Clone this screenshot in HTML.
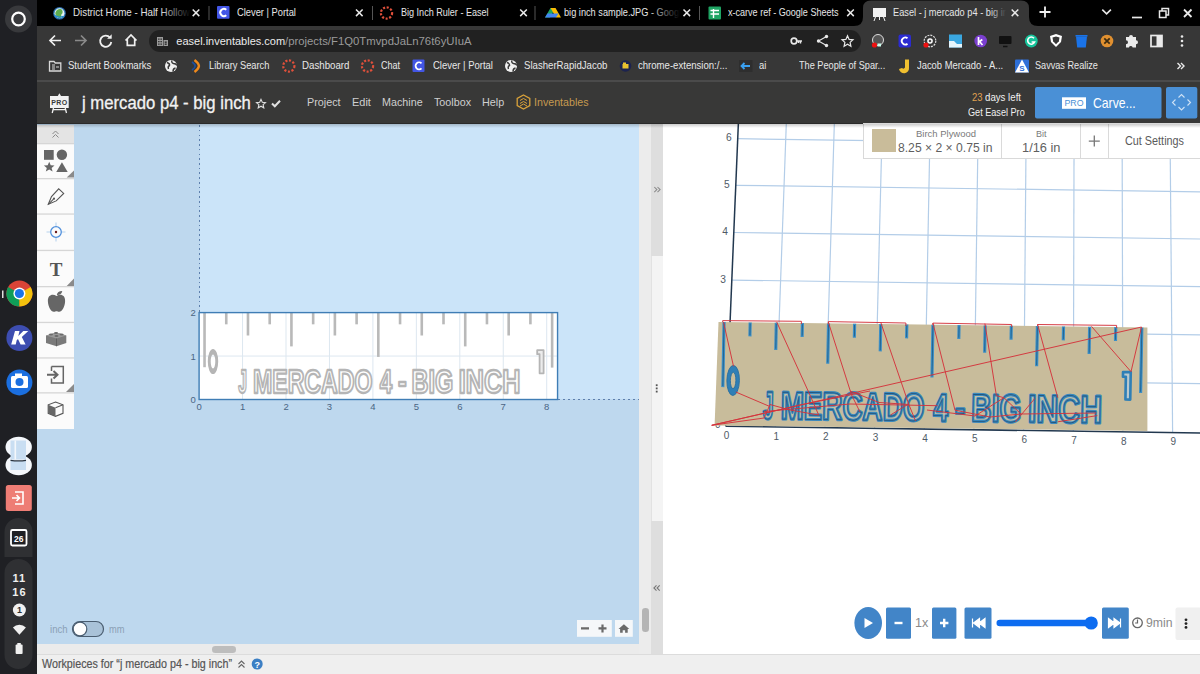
<!DOCTYPE html>
<html><head><meta charset="utf-8">
<style>
*{margin:0;padding:0;box-sizing:border-box}
html,body{width:1200px;height:674px;overflow:hidden;background:#fff;font-family:"Liberation Sans",sans-serif;position:relative}
.a{position:absolute}
.t{position:absolute;white-space:nowrap;line-height:1}
svg{position:absolute;overflow:visible}

</style></head><body>
<div class="a" style="left:0;top:0;width:37px;height:674px;background:#1f2024"></div>
<div class="a" style="left:37px;top:0;width:1163px;height:26px;background:#000"></div>
<div class="a" style="left:37px;top:26px;width:1163px;height:54px;background:#373737"></div>
<div class="a" style="left:37px;top:80px;width:1163px;height:2px;background:#4b4b4b"></div>
<svg style="left:0;top:0" width="37" height="674">
  <circle cx="18.5" cy="19" r="13.5" fill="#38393c"/>
  <circle cx="18.5" cy="19" r="6.3" fill="none" stroke="#fff" stroke-width="2.2"/>
  <rect x="2" y="290.5" width="1.5" height="7.5" fill="#ddd"/>
  <g transform="translate(19.4,293.5)">
    <circle r="13" fill="#db4437"/>
    <path d="M0 0 L-11.26 -6.5 A13 13 0 0 0 0 13 Z" fill="#0f9d58"/>
    <path d="M0 0 L11.26 -6.5 A13 13 0 0 1 0 13 Z" fill="#f4c20d"/>
    <circle r="6" fill="#fff"/><circle r="4.6" fill="#1a73e8"/>
  </g>
  <circle cx="19.4" cy="338" r="13" fill="#3d4db0"/>
  <path d="M15 331 h4.5 l-1.2 5 l5 -5 h5 l-6.5 6 l3.8 7.5 h-5 l-2.6 -5.5 l-1.3 1.2 l-1 4.3 h-4.5 z" fill="#fff"/>
  <circle cx="19.4" cy="382.4" r="13" fill="#1b6fe0"/>
  <rect x="11" y="376" width="17" height="12" rx="1.5" fill="#fff"/>
  <rect x="15" y="373.5" width="7" height="3" fill="#fff"/>
  <circle cx="19.5" cy="382" r="4" fill="#1b6fe0"/>
  <ellipse cx="18.7" cy="447" rx="13.2" ry="10.3" fill="#f4f7fb"/>
  <ellipse cx="18.7" cy="465" rx="13.2" ry="10.3" fill="#f4f7fb"/>
  <rect x="10.5" y="440.5" width="15.5" height="19" fill="#c9def2"/>
  <rect x="10.5" y="461" width="15.5" height="9" fill="#c9def2"/>
  <rect x="14.5" y="440.5" width="1.6" height="19" fill="#f4f7fb"/>
  <path d="M10.5 460.3 q8 1.2 15.5 0" stroke="#2a3440" stroke-width="1.3" fill="none"/>
  <rect x="5.8" y="485" width="26" height="26" rx="2.5" fill="#ee7d75"/>
  <path d="M15 492 h8 v12 h-8 M12 498 h7 M16.5 495 l3 3 l-3 3" fill="none" stroke="#fff" stroke-width="1.6"/>
  <path d="M4.5 532 a14 14 0 0 1 28 0 V557 H4.5 Z" fill="#2f3033"/>
  <rect x="11" y="530" width="15.5" height="15.5" rx="1.5" fill="#1f2024" stroke="#fff" stroke-width="1.8"/>
  <text x="18.8" y="541.8" font-size="8.5" font-weight="bold" fill="#fff" text-anchor="middle" font-family="Liberation Sans">26</text>
  <path d="M4.5 573 a14 14 0 0 1 28 0 V655 a14 14 0 0 1 -28 0 Z" fill="#2f3033"/>
  <text x="19.4" y="581.5" font-size="11" font-weight="bold" fill="#f0f0f0" text-anchor="middle" font-family="Liberation Sans" letter-spacing="1">11</text>
  <text x="19.4" y="595.5" font-size="11" font-weight="bold" fill="#f0f0f0" text-anchor="middle" font-family="Liberation Sans" letter-spacing="1">16</text>
  <circle cx="19.4" cy="610" r="6.5" fill="#f0f0f0"/>
  <text x="19.4" y="613.3" font-size="9" font-weight="bold" fill="#2f3033" text-anchor="middle" font-family="Liberation Sans">1</text>
  <path d="M12.9 627.5 A9 9 0 0 1 25.9 627.5 L19.4 634.8 Z" fill="#f0f0f0"/>
  <rect x="15.6" y="644.5" width="7" height="9.5" rx="1" fill="#f0f0f0"/>
  <rect x="17.3" y="643" width="3.5" height="2" fill="#f0f0f0"/>
</svg>
<svg style="left:854px;top:0" width="184" height="27">
  <path d="M0 26 Q9 26 9 17 V8 Q9 0.5 17 0.5 H167 Q175 0.5 175 8 V17 Q175 26 184 26 Z" fill="#373737"/>
</svg>
<svg style="left:0;top:0" width="1200" height="26">
  <g transform="translate(59.5,13.3)"><circle r="6.3" fill="#2a6fb0"/><circle r="5" fill="#e6f2fa"/><path d="M-4 -1 q2 -4 6 -3 q2 2 1 4 q-2 1 -1 4 q-3 2 -5 -1 q-2 -2 -1 -4z" fill="#5fae4f"/><path d="M-5 2 q4 3 9 1" stroke="#1f8fd0" stroke-width="1.2" fill="none"/></g>
  <rect x="217" y="6" width="12.5" height="12.7" rx="1" fill="#4356e6"/>
  <path d="M226.3 9.8 A3.6 3.6 0 1 0 226.3 15.2" fill="none" stroke="#fff" stroke-width="1.9"/>
  <circle cx="386.5" cy="13" r="5.6" fill="none" stroke="#e0503b" stroke-width="2.2" stroke-dasharray="2.1 1.6"/>
  <path d="M545 17.5 l5.5 -9.5 h5 l-5.5 9.5z" fill="#1ea362"/>
  <path d="M550.5 8 h5 l5.5 9.5 h-5z" fill="#fbbc04"/>
  <path d="M545 17.5 h11 l2.5 -4 h-11z" fill="#4285f4"/>
  <rect x="708.5" y="6.5" width="12.5" height="13" rx="1" fill="#1fa463"/>
  <path d="M710.5 10.5 h8.5 M713.5 9 v9 M710.5 14 h8.5" stroke="#fff" stroke-width="1.4"/>
  <rect x="873" y="8" width="13" height="9" fill="#f2f2f2"/>
  <path d="M875.5 17 l-1.5 4 M883.5 17 l1.5 4 M879.5 17 v3" stroke="#f2f2f2" stroke-width="1"/>
</svg>
<div class="a" style="left:70px;top:0;width:121px;height:674px;overflow:hidden"><div class="a" style="left:-70px;top:0;width:1200px;height:674px"><div class="t" style="left:73.3px;top:7.58px;font-size:10.2px;color:#e0e0e0;transform:scaleX(0.9608);transform-origin:0 0;">District Home - Half Hollow</div></div></div>
<div class="a" style="left:160px;top:2px;width:31px;height:22px;background:linear-gradient(90deg,rgba(0,0,0,0),#000)"></div>
<div class="t" style="left:236.8px;top:7.58px;font-size:10.2px;color:#e6e6e6;transform:scaleX(0.9156);transform-origin:0 0;">Clever | Portal</div>
<div class="t" style="left:401.0px;top:7.58px;font-size:10.2px;color:#e6e6e6;transform:scaleX(0.8890);transform-origin:0 0;">Big Inch Ruler - Easel</div>
<div class="a" style="left:560px;top:0;width:120px;height:674px;overflow:hidden"><div class="a" style="left:-560px;top:0;width:1200px;height:674px"><div class="t" style="left:564.3px;top:7.58px;font-size:10.2px;color:#e6e6e6;transform:scaleX(0.9035);transform-origin:0 0;">big inch sample.JPG - Google Drive</div></div></div>
<div class="a" style="left:648px;top:2px;width:32px;height:22px;background:linear-gradient(90deg,rgba(0,0,0,0),#000)"></div>
<div class="t" style="left:728.3px;top:7.58px;font-size:10.2px;color:#e6e6e6;transform:scaleX(0.8876);transform-origin:0 0;">x-carve ref - Google Sheets</div>
<div class="a" style="left:890px;top:0;width:116px;height:674px;overflow:hidden"><div class="a" style="left:-890px;top:0;width:1200px;height:674px"><div class="t" style="left:892.6px;top:7.58px;font-size:10.2px;color:#e6e6e6;transform:scaleX(0.9052);transform-origin:0 0;">Easel - j mercado p4 - big inch</div></div></div>
<div class="a" style="left:990px;top:3px;width:16px;height:22px;background:linear-gradient(90deg,rgba(55,55,55,0),#373737)"></div>
<svg style="left:0;top:0" width="1200" height="26">
<path d="M192.7 9.5 l6.6 6.6 M199.3 9.5 l-6.6 6.6" stroke="#e8e8e8" stroke-width="1.5"/>
<path d="M356.0 9.5 l6.6 6.6 M362.6 9.5 l-6.6 6.6" stroke="#e8e8e8" stroke-width="1.5"/>
<path d="M520.2 9.5 l6.6 6.6 M526.8 9.5 l-6.6 6.6" stroke="#e8e8e8" stroke-width="1.5"/>
<path d="M683.5 9.5 l6.6 6.6 M690.0999999999999 9.5 l-6.6 6.6" stroke="#e8e8e8" stroke-width="1.5"/>
<path d="M847.2 9.5 l6.6 6.6 M853.8 9.5 l-6.6 6.6" stroke="#e8e8e8" stroke-width="1.5"/>
<path d="M1011.7 9.5 l6.6 6.6 M1018.3 9.5 l-6.6 6.6" stroke="#e8e8e8" stroke-width="1.5"/>
<rect x="208.5" y="6" width="1" height="14" fill="#555"/>
<rect x="372" y="6" width="1" height="14" fill="#555"/>
<rect x="534.5" y="6" width="1" height="14" fill="#555"/>
<rect x="699" y="6" width="1" height="14" fill="#555"/>
<path d="M1045 6.5 v11 M1039.5 12 h11" stroke="#f0f0f0" stroke-width="1.8"/>
<path d="M1102.3 9.6 l4.3 4.3 l4.3 -4.3" fill="none" stroke="#e8e8e8" stroke-width="1.6"/>
<path d="M1132 17.5 h10" stroke="#e8e8e8" stroke-width="1.7"/>
<rect x="1159.5" y="11" width="6.5" height="6.5" fill="none" stroke="#e8e8e8" stroke-width="1.5"/>
<path d="M1162 11 V8.5 H1168.5 V15 H1166" fill="none" stroke="#e8e8e8" stroke-width="1.5"/>
<path d="M1184 9.5 l7.5 7.5 M1191.5 9.5 l-7.5 7.5" stroke="#e8e8e8" stroke-width="1.8"/>
</svg>
<div class="a" style="left:149px;top:30.4px;width:712px;height:22px;border-radius:11px;background:#212121"></div>
<svg style="left:0;top:0" width="1200" height="80">
  <path d="M50 40.5 h11 M55 35.5 l-5 5 l5 5" fill="none" stroke="#f0f0f0" stroke-width="1.7"/>
  <path d="M86 40.5 h-11 M81 35.5 l5 5 l-5 5" fill="none" stroke="#8a8a8a" stroke-width="1.7"/>
  <path d="M110 37.5 A5.6 5.6 0 1 0 111.3 42" fill="none" stroke="#f0f0f0" stroke-width="1.8"/>
  <path d="M111.7 34.2 v4.6 h-4.6 z" fill="#f0f0f0"/>
  <path d="M125.5 40.5 l5.5 -5.5 l5.5 5.5 M127.3 39 v6.3 h7.4 v-6.3" fill="none" stroke="#f0f0f0" stroke-width="1.7"/>
  <g fill="#9a9a9a"><rect x="157" y="37" width="6" height="9"/><rect x="163.5" y="40" width="4.5" height="6"/></g>
  <g fill="#212121"><rect x="158.2" y="38.5" width="1.3" height="1.3"/><rect x="160.5" y="38.5" width="1.3" height="1.3"/><rect x="158.2" y="41" width="1.3" height="1.3"/><rect x="160.5" y="41" width="1.3" height="1.3"/><rect x="158.2" y="43.5" width="1.3" height="1.3"/><rect x="160.5" y="43.5" width="1.3" height="1.3"/><rect x="164.7" y="41.5" width="2" height="1.3"/><rect x="164.7" y="43.5" width="2" height="1.3"/></g>
  <circle cx="794" cy="41" r="2.8" fill="none" stroke="#e8e8e8" stroke-width="1.7"/>
  <path d="M796.8 41 h5.2 M800.5 41 v2.6 M798.5 41 v2" stroke="#e8e8e8" stroke-width="1.5"/>
  <circle cx="826.5" cy="36.5" r="1.7" fill="#e8e8e8"/><circle cx="818.5" cy="41" r="1.7" fill="#e8e8e8"/><circle cx="826.5" cy="45.5" r="1.7" fill="#e8e8e8"/>
  <path d="M826.5 36.5 L818.5 41 L826.5 45.5" fill="none" stroke="#e8e8e8" stroke-width="1.1"/>
  <path d="M847.5 35.8 l1.6 3.6 l3.9 .4 l-2.9 2.6 l.8 3.8 l-3.4 -2 l-3.4 2 l.8 -3.8 l-2.9 -2.6 l3.9 -.4z" fill="none" stroke="#e8e8e8" stroke-width="1.2"/>
  <!-- extensions -->
  <circle cx="878" cy="40" r="5.5" fill="#555" stroke="#ddd" stroke-width="1"/>
  <circle cx="874.5" cy="45" r="2.6" fill="#ee1111"/><rect x="877.5" y="43.5" width="3.5" height="3" fill="#cfe"/>
  <rect x="898.5" y="34.5" width="12.5" height="13" rx="2" fill="#2b2bd0"/>
  <path d="M907.5 38.3 A3.5 3.5 0 1 0 907.5 43.7" fill="none" stroke="#fff" stroke-width="1.8"/>
  <circle cx="930" cy="41" r="5.8" fill="none" stroke="#ddd" stroke-width="1.2" stroke-dasharray="2 1"/>
  <circle cx="930" cy="41" r="2.8" fill="#fff"/><circle cx="930" cy="41" r="1.3" fill="#555"/>
  <circle cx="926" cy="45" r="2.6" fill="#ee1111"/>
  <rect x="949" y="34.5" width="13" height="13" fill="#3aa7e0"/>
  <path d="M949 41 h5 l3 3 h5 v3.5 h-13z" fill="#e6f5fc"/>
  <circle cx="980.7" cy="41" r="6.3" fill="#7b3fd0"/>
  <path d="M978.5 37 v8 M978.5 42.3 l3.8 -2.8 M979.5 41.5 l3 3.5" stroke="#fff" stroke-width="1.7" fill="none"/>
  <rect x="999" y="36" width="12.5" height="8" rx="1" fill="#111"/>
  <path d="M1003 46.5 h4.5" stroke="#111" stroke-width="1.5"/>
  <circle cx="1031.3" cy="41" r="6.4" fill="#15c39a"/>
  <path d="M1034 38.2 A3.6 3.6 0 1 0 1034.6 42 h-3" fill="none" stroke="#fff" stroke-width="1.6"/>
  <path d="M1050 36 l6 -2 l6 2 l-1 6 l-5 5 l-5 -5z" fill="#fff"/>
  <path d="M1052.5 37.5 l3.5 -1 l3.5 1 l-.7 3.8 l-2.8 3 l-2.8 -3z" fill="#373737"/>
  <path d="M1076 36.5 h11 l-1.2 11 h-8.6z" fill="#1a73e8"/><rect x="1075.5" y="35" width="12" height="1.6" fill="#1a73e8"/>
  <circle cx="1107" cy="41" r="6.3" fill="#e09030"/>
  <path d="M1104.3 38.3 l5.4 5.4 M1109.7 38.3 l-5.4 5.4" stroke="#3a2a10" stroke-width="1.7"/>
  <path d="M1126 37 h3 a2 2 0 0 1 4 0 h3 v3.2 a2 2 0 0 1 0 4 v3.3 h-3.3 a2 2 0 0 0 -3.8 0 h-2.9 v-3.3 a2 2 0 0 0 0 -4z" fill="#eaeaea"/>
  <rect x="1151" y="35.5" width="11" height="11" fill="none" stroke="#eaeaea" stroke-width="1.7"/>
  <rect x="1156.5" y="35.5" width="5.5" height="11" fill="#eaeaea"/>
  <circle cx="1182" cy="36.5" r="1.3" fill="#eaeaea"/><circle cx="1182" cy="41" r="1.3" fill="#eaeaea"/><circle cx="1182" cy="45.5" r="1.3" fill="#eaeaea"/>
</svg>
<div class="t" style="left:176.3px;top:35.80px;font-size:11px;color:#ececec;">easel.inventables.com</div>
<div class="t" style="left:285.3px;top:35.80px;font-size:11px;color:#9a9a9a;transform:scaleX(1.0305);transform-origin:0 0;">/projects/F1Q0TmvpdJaLn76t6yUIuA</div>
<svg style="left:0;top:0" width="1200" height="80">
  <path d="M49.5 61.5 h4.5 l1.3 1.5 h5.5 v8 h-11.3z" fill="none" stroke="#d8d8d8" stroke-width="1.3"/>
  <path d="M52 65 h3 M52 67 h3 M52 69 h3 M56 67 h3" stroke="#d8d8d8" stroke-width="1"/>
  <circle cx="171" cy="66" r="6" fill="#f0f0f0"/>
  <path d="M167 62.5 q3 1 2.5 3 q-2 1 -1 3.5 M172 60.5 q-1 2 1.5 3 q2.5 0 3.5 2 M173 71.5 q0 -3 2.5 -3.5" fill="none" stroke="#373737" stroke-width="1.4"/>
  <path d="M194.5 60 q4 3 4.5 6 q-.5 3 -4.5 6" fill="none" stroke="#f08a1c" stroke-width="2.3"/>
  <path d="M192 62 q3 2 3.2 4 q-.2 2 -3.2 4" fill="none" stroke="#1d4fa0" stroke-width="1.6"/>
  <circle cx="288.8" cy="66" r="5.6" fill="none" stroke="#e0503b" stroke-width="2.2" stroke-dasharray="2.1 1.6"/>
  <circle cx="367.5" cy="66" r="5.6" fill="none" stroke="#e0503b" stroke-width="2.2" stroke-dasharray="2.1 1.6"/>
  <rect x="412.5" y="59.5" width="12" height="12.5" rx="1" fill="#4356e6"/>
  <path d="M421.5 63.3 A3.5 3.5 0 1 0 421.5 68.4" fill="none" stroke="#fff" stroke-width="1.8"/>
  <circle cx="511" cy="66" r="6" fill="#f0f0f0"/>
  <path d="M507 62.5 q3 1 2.5 3 q-2 1 -1 3.5 M512 60.5 q-1 2 1.5 3 q2.5 0 3.5 2 M513 71.5 q0 -3 2.5 -3.5" fill="none" stroke="#373737" stroke-width="1.4"/>
  <circle cx="625.5" cy="66" r="5.8" fill="#1c2350"/><rect x="622.5" y="64" width="6" height="4.5" fill="#e8c030"/><rect x="623" y="62.5" width="3" height="1.5" fill="#e8c030"/>
  <rect x="739" y="60" width="13.5" height="12" fill="#2e2e2e"/>
  <path d="M750 66 h-8 M744.5 63 l-3 3 l3 3" fill="none" stroke="#3aa0f0" stroke-width="1.8"/>
  <path d="M905 59.5 h4 v8 a5 5 0 0 1 -10 1.5 l3 -1 a2 2 0 0 0 3 -.5z" fill="#f0c030"/>
  <rect x="1015" y="59.5" width="14" height="13" rx="1" fill="#2e6fd8"/>
  <path d="M1015 72.5 l7 -13 l7 13z" fill="#fff"/>
  <text x="1022" y="71" font-size="8" font-weight="bold" fill="#2e6fd8" text-anchor="middle" font-family="Liberation Sans">S</text>
  <path d="M1177.5 63 l3 3 l-3 3 M1181 63 l3 3 l-3 3" fill="none" stroke="#eaeaea" stroke-width="1.4"/>
</svg>
<div class="t" style="left:67.5px;top:61.28px;font-size:10.2px;color:#e8e8e8;transform:scaleX(0.9381);transform-origin:0 0;">Student Bookmarks</div>
<div class="t" style="left:208.5px;top:61.28px;font-size:10.2px;color:#e8e8e8;transform:scaleX(0.9121);transform-origin:0 0;">Library Search</div>
<div class="t" style="left:301.5px;top:61.28px;font-size:10.2px;color:#e8e8e8;transform:scaleX(0.9519);transform-origin:0 0;">Dashboard</div>
<div class="t" style="left:381.0px;top:61.28px;font-size:10.2px;color:#e8e8e8;transform:scaleX(0.8818);transform-origin:0 0;">Chat</div>
<div class="t" style="left:432.5px;top:61.28px;font-size:10.2px;color:#e8e8e8;transform:scaleX(0.9311);transform-origin:0 0;">Clever | Portal</div>
<div class="t" style="left:524.0px;top:61.28px;font-size:10.2px;color:#e8e8e8;transform:scaleX(0.9440);transform-origin:0 0;">SlasherRapidJacob</div>
<div class="t" style="left:638.0px;top:61.28px;font-size:10.2px;color:#e8e8e8;transform:scaleX(0.9397);transform-origin:0 0;">chrome-extension:/...</div>
<div class="t" style="left:758.8px;top:61.28px;font-size:10.2px;color:#e8e8e8;transform:scaleX(0.9195);transform-origin:0 0;">ai</div>
<div class="t" style="left:798.8px;top:61.28px;font-size:10.2px;color:#e8e8e8;transform:scaleX(0.9005);transform-origin:0 0;">The People of Spar...</div>
<div class="t" style="left:916.7px;top:61.28px;font-size:10.2px;color:#e8e8e8;transform:scaleX(0.9225);transform-origin:0 0;">Jacob Mercado - A...</div>
<div class="t" style="left:1035.0px;top:61.28px;font-size:10.2px;color:#e8e8e8;transform:scaleX(0.8961);transform-origin:0 0;">Savvas Realize</div>
<div class="a" style="left:37px;top:82px;width:1163px;height:42px;background:#383837;border-bottom:1.5px solid #2a2a2a"></div>
<svg style="left:0;top:80px" width="1200" height="45">
  <path d="M59.4 13.2 l1.6 2.8 h-3.2z" fill="#f2f2f2"/>
  <rect x="50" y="16" width="18.7" height="12" fill="#f2f2f2"/>
  <path d="M53.5 28 l-1.3 5 M65.2 28 l1.3 5 M53 29.6 h12.7" stroke="#f2f2f2" stroke-width="1.3"/>
  <text x="59.4" y="25.2" font-size="7" font-weight="bold" fill="#3a3a3a" text-anchor="middle" font-family="Liberation Sans" letter-spacing=".4">PRO</text>
  <path transform="translate(0,4.6)" d="M261 14.8 l1.3 2.9 l3.2 .3 l-2.4 2.1 l.7 3.1 l-2.8 -1.6 l-2.8 1.6 l.7 -3.1 l-2.4 -2.1 l3.2 -.3z" fill="none" stroke="#e0e0e0" stroke-width="1.1"/>
  <path transform="translate(0,4)" d="M272 19.5 l2.8 2.8 l5.2 -5.6" fill="none" stroke="#e0e0e0" stroke-width="2"/>
  <g transform="translate(523.5,22)" fill="none" stroke="#d9a23a" stroke-width="1.3">
    <path d="M0 -7 L6.3 -3.5 V3.5 L0 7 L-6.3 3.5 V-3.5 Z"/>
    <path d="M-3.5 -1.5 L0 -3.5 L3.5 -1.5 M-3.5 1.5 L0 -0.5 L3.5 1.5 M-3.5 4 L0 2 L3.5 4" stroke-width="1"/>
  </g>
  <rect x="1035" y="6.9" width="126.5" height="31.6" rx="2" fill="#4a90d6"/>
  <rect x="1166" y="6.9" width="31.3" height="31.6" rx="2" fill="#4a90d6"/>
  <rect x="1062" y="17.3" width="24" height="11.5" fill="#fff"/>
  <text x="1074" y="26.3" font-size="8.8" fill="#4a90d6" text-anchor="middle" font-family="Liberation Sans">PRO</text>
  <g fill="none" stroke="#cfe2f5" stroke-width="1.1">
    <path d="M1178.5 17.5 l3 -3 l3 3 M1178.5 27 l3 3 l3 -3 M1175.5 19.5 l-3 3 l3 3 M1187.5 19.5 l3 3 l-3 3"/>
  </g>
</svg>
<div class="t" style="left:82.0px;top:95.02px;font-size:17.8px;color:#f2f2f2;transform:scaleX(0.9385);transform-origin:0 0;-webkit-text-stroke:0.3px #f2f2f2">j mercado p4 - big inch</div>
<div class="t" style="left:306.8px;top:96.66px;font-size:11.5px;color:#cfcfcf;transform:scaleX(0.9387);transform-origin:0 0;">Project</div>
<div class="t" style="left:352.0px;top:96.66px;font-size:11.5px;color:#cfcfcf;transform:scaleX(0.9537);transform-origin:0 0;">Edit</div>
<div class="t" style="left:382.0px;top:96.66px;font-size:11.5px;color:#cfcfcf;transform:scaleX(0.9340);transform-origin:0 0;">Machine</div>
<div class="t" style="left:434.0px;top:96.66px;font-size:11.5px;color:#cfcfcf;transform:scaleX(0.9334);transform-origin:0 0;">Toolbox</div>
<div class="t" style="left:481.7px;top:96.66px;font-size:11.5px;color:#cfcfcf;transform:scaleX(0.9428);transform-origin:0 0;">Help</div>
<div class="t" style="left:534.0px;top:96.66px;font-size:11.5px;color:#c69a50;transform:scaleX(0.9265);transform-origin:0 0;">Inventables</div>
<div class="t" style="left:971.9px;top:92.40px;font-size:11px;color:#e0a050;transform:scaleX(0.8581);transform-origin:0 0;">23</div>
<div class="t" style="left:985.0px;top:92.40px;font-size:11px;color:#f0f0f0;transform:scaleX(0.8788);transform-origin:0 0;">days left</div>
<div class="t" style="left:968.3px;top:107.00px;font-size:11px;color:#f0f0f0;transform:scaleX(0.8280);transform-origin:0 0;">Get Easel Pro</div>
<div class="t" style="left:1092.7px;top:94.97px;font-size:15px;color:#ffffff;transform:scaleX(0.8131);transform-origin:0 0;">Carve...</div>
<div class="a" style="left:37px;top:124px;width:602px;height:520px;background:#bed8ee"></div>
<div class="a" style="left:199.5px;top:124px;width:439.5px;height:275px;background:#cbe4f9"></div>
<div class="a" style="left:198.5px;top:125px;width:1.3px;height:188px;background:repeating-linear-gradient(180deg,#5d7fad 0 1.6px,transparent 1.6px 4.75px)"></div>
<div class="a" style="left:558px;top:398.6px;width:81px;height:1.3px;background:repeating-linear-gradient(90deg,#5d7fad 0 2.5px,transparent 2.5px 5px)"></div>
<div class="a" style="left:37px;top:125px;width:37px;height:304px;background:#fbfbfb"></div>
<div class="a" style="left:37px;top:125px;width:37px;height:18px;background:#e4e4e4"></div>
<svg style="left:0;top:0" width="80" height="440">
<rect x="37" y="143" width="37" height="1.3" fill="#d6d6d6"/>
<rect x="37" y="178" width="37" height="1.3" fill="#d6d6d6"/>
<rect x="37" y="213.4" width="37" height="1.3" fill="#d6d6d6"/>
<rect x="37" y="249.8" width="37" height="1.3" fill="#d6d6d6"/>
<rect x="37" y="286" width="37" height="1.3" fill="#d6d6d6"/>
<rect x="37" y="321.8" width="37" height="1.3" fill="#d6d6d6"/>
<rect x="37" y="357.3" width="37" height="1.3" fill="#d6d6d6"/>
<rect x="37" y="392.2" width="37" height="1.3" fill="#d6d6d6"/>
<path d="M52.5 134 l3 -3 l3 3 M52.5 137.5 l3 -3 l3 3" fill="none" stroke="#8a8a8a" stroke-width="1"/>
<g fill="#666">
  <rect x="44" y="150" width="9.7" height="9.8"/>
  <circle cx="61.9" cy="154.8" r="5.2"/>
  <path d="M49.2 161.8 l1.5 3.5 l3.8 .2 l-2.9 2.4 l1 3.7 l-3.4 -2.1 l-3.4 2.1 l1 -3.7 l-2.9 -2.4 l3.8 -.2z"/>
  <path d="M56.2 172 l5.75 -9.8 l5.75 9.8z"/>
  <path d="M74 170.4 v7.2 h-7.3z" fill="#8a8a8a"/>
  <path d="M74 278.6 v7.3 h-7.3z" fill="#8a8a8a"/>
  <path d="M74 384 v8 h-8z" fill="#8a8a8a"/>
</g>
<g fill="none" stroke="#555" stroke-width="1.1">
  <path d="M48.3 204.3 l3.2 -7.8 l7.2 -7.7 l5 4.6 l-7.5 7.5 z"/>
  <path d="M48.3 204.3 l5.2 -5.2"/>
</g>
<circle cx="54" cy="198.7" r="1.1" fill="#555"/>
<g stroke="#b8d4ee" stroke-width="1.1"><path d="M56 222.5 v3.5 M56 238 v3.5 M46.5 232 h3.5 M62 232 h3.5"/></g>
<circle cx="56" cy="232" r="5.3" fill="none" stroke="#4f8fdc" stroke-width="1.3"/>
<circle cx="56" cy="232" r="1.2" fill="#6a1a1a"/>
<text x="56" y="275.5" font-size="19" font-weight="bold" fill="#555" text-anchor="middle" font-family="Liberation Serif">T</text>
<path d="M56.5 296 c-4 -2.5 -9 -1 -8.6 5.5 c.4 6 3.3 10.5 6 10.3 c1.2 0 1.8 -.6 2.6 -.6 c.8 0 1.4 .6 2.6 .6 c2.7 .2 5.6 -4.3 6 -10.3 c.4 -6.5 -4.6 -8 -8.6 -5.5z" fill="#666"/>
<path d="M56.8 295 c.5 -2.5 2 -4 5.5 -4 c-.5 2.8 -2.3 4.2 -5.5 4z" fill="#666"/>
<path d="M46 335.5 l10.5 -3 l9.8 3 v7.5 l-9.8 3.2 l-10.5 -3.2z" fill="#7a7a7a"/>
<path d="M46 335.5 l10.5 3 l9.8 -3 l-9.8 -3z" fill="#999"/>
<path d="M56.5 338.5 v7.7" stroke="#5f5f5f" stroke-width="1"/>
<g fill="#6a6a6a"><ellipse cx="51" cy="334.4" rx="2" ry="1"/><ellipse cx="56" cy="333" rx="2" ry="1"/><ellipse cx="56.5" cy="336" rx="2" ry="1"/><ellipse cx="61.5" cy="334.5" rx="2" ry="1"/></g>
<path d="M51.5 366.5 h11.8 v16.5 h-11.8 v-4.5 M51.5 371 v-4.5" fill="none" stroke="#666" stroke-width="1.5"/>
<path d="M47 374.8 h9.5 M53.5 371 l4 3.8 l-4 3.8" fill="none" stroke="#666" stroke-width="2"/>
<path d="M55.5 402 l7.5 2.8 v8.5 l-7.5 3 l-7.3 -3 v-8.5z" fill="none" stroke="#555" stroke-width="1.1"/>
<path d="M48.2 404.8 l7.3 3 v8.5 l-7.3 -3z" fill="#666"/>
<path d="M55.5 407.8 l7.5 -3" stroke="#555" stroke-width="1.1"/>

</svg>
<svg style="left:0;top:0" width="640" height="650">
<rect x="199.10" y="312.60" width="358.46" height="86.90" fill="#fff"/>
<rect x="242.05" y="312.60" width="1" height="86.90" fill="#dde7f0"/>
<rect x="285.50" y="312.60" width="1" height="86.90" fill="#dde7f0"/>
<rect x="328.95" y="312.60" width="1" height="86.90" fill="#dde7f0"/>
<rect x="372.40" y="312.60" width="1" height="86.90" fill="#dde7f0"/>
<rect x="415.85" y="312.60" width="1" height="86.90" fill="#dde7f0"/>
<rect x="459.30" y="312.60" width="1" height="86.90" fill="#dde7f0"/>
<rect x="502.75" y="312.60" width="1" height="86.90" fill="#dde7f0"/>
<rect x="546.20" y="312.60" width="1" height="86.90" fill="#dde7f0"/>
<rect x="199.10" y="355.55" width="358.46" height="1" fill="#dde7f0"/>
<rect x="203.23" y="312.60" width="2.6" height="54.62" fill="#b9b9b9"/>
<rect x="224.96" y="312.60" width="2.6" height="11.73" fill="#b9b9b9"/>
<rect x="246.68" y="312.60" width="2.6" height="22.90" fill="#b9b9b9"/>
<rect x="268.41" y="312.60" width="2.6" height="11.73" fill="#b9b9b9"/>
<rect x="290.13" y="312.60" width="2.6" height="33.80" fill="#b9b9b9"/>
<rect x="311.86" y="312.60" width="2.6" height="11.73" fill="#b9b9b9"/>
<rect x="333.58" y="312.60" width="2.6" height="22.90" fill="#b9b9b9"/>
<rect x="355.31" y="312.60" width="2.6" height="11.73" fill="#b9b9b9"/>
<rect x="377.03" y="312.60" width="2.6" height="44.32" fill="#b9b9b9"/>
<rect x="398.76" y="312.60" width="2.6" height="11.73" fill="#b9b9b9"/>
<rect x="420.48" y="312.60" width="2.6" height="22.90" fill="#b9b9b9"/>
<rect x="442.21" y="312.60" width="2.6" height="11.73" fill="#b9b9b9"/>
<rect x="463.93" y="312.60" width="2.6" height="33.80" fill="#b9b9b9"/>
<rect x="485.66" y="312.60" width="2.6" height="11.73" fill="#b9b9b9"/>
<rect x="507.38" y="312.60" width="2.6" height="22.90" fill="#b9b9b9"/>
<rect x="529.11" y="312.60" width="2.6" height="11.73" fill="#b9b9b9"/>
<rect x="550.83" y="312.60" width="2.6" height="55.01" fill="#b9b9b9"/>
<text transform="translate(238.21,393.30) scale(0.4834,1)" font-size="32.8" font-weight="bold" font-family="Liberation Sans" fill="#fff" stroke="#b5b5b5" stroke-width="2.3" stroke-linejoin="round">J</text>
<text transform="translate(252.90,393.30) scale(0.7064,1)" font-size="32.8" font-weight="bold" font-family="Liberation Sans" fill="#fff" stroke="#b5b5b5" stroke-width="2.3" stroke-linejoin="round">MERCADO</text>
<text transform="translate(379.81,393.30) scale(0.6826,1)" font-size="32.8" font-weight="bold" font-family="Liberation Sans" fill="#fff" stroke="#b5b5b5" stroke-width="2.3" stroke-linejoin="round">4</text>
<text transform="translate(397.94,393.30) scale(0.7922,1)" font-size="32.8" font-weight="bold" font-family="Liberation Sans" fill="#fff" stroke="#b5b5b5" stroke-width="2.3" stroke-linejoin="round">-</text>
<text transform="translate(411.58,393.30) scale(0.7155,1)" font-size="32.8" font-weight="bold" font-family="Liberation Sans" fill="#fff" stroke="#b5b5b5" stroke-width="2.3" stroke-linejoin="round">BIG</text>
<text transform="translate(458.76,393.30) scale(0.7681,1)" font-size="32.8" font-weight="bold" font-family="Liberation Sans" fill="#fff" stroke="#b5b5b5" stroke-width="2.3" stroke-linejoin="round">INCH</text>
<path d="M207.8 361.5 a5.2 12.6 0 1 0 10.4 0 a5.2 12.6 0 1 0 -10.4 0 Z M210.7 361.5 a2.3 6.9 0 1 0 4.6 0 a2.3 6.9 0 1 0 -4.6 0 Z" fill="#b5b5b5" fill-rule="evenodd"/>
<path d="M537.2 350.2 H543.6 V373.3 H539.6 V354.2 H537.2 Z" fill="#ececec" stroke="#b5b5b5" stroke-width="1.8" stroke-linejoin="round"/>
<rect x="199.10" y="312.60" width="358.46" height="86.90" fill="none" stroke="#3f7db5" stroke-width="1.4"/>
</svg>
<div class="t" style="left:196.5px;top:402.32px;font-size:9.5px;color:#4a6584;">0</div>
<div class="t" style="left:239.9px;top:402.32px;font-size:9.5px;color:#4a6584;">1</div>
<div class="t" style="left:283.4px;top:402.32px;font-size:9.5px;color:#4a6584;">2</div>
<div class="t" style="left:326.8px;top:402.32px;font-size:9.5px;color:#4a6584;">3</div>
<div class="t" style="left:370.3px;top:402.32px;font-size:9.5px;color:#4a6584;">4</div>
<div class="t" style="left:413.7px;top:402.32px;font-size:9.5px;color:#4a6584;">5</div>
<div class="t" style="left:457.2px;top:402.32px;font-size:9.5px;color:#4a6584;">6</div>
<div class="t" style="left:500.6px;top:402.32px;font-size:9.5px;color:#4a6584;">7</div>
<div class="t" style="left:544.1px;top:402.32px;font-size:9.5px;color:#4a6584;">8</div>
<div class="t" style="left:190.5px;top:308.42px;font-size:9.5px;color:#4a6584;">2</div>
<div class="t" style="left:190.5px;top:351.82px;font-size:9.5px;color:#4a6584;">1</div>
<div class="t" style="left:190.5px;top:394.62px;font-size:9.5px;color:#4a6584;">0</div>
<div class="t" style="left:49.8px;top:623.74px;font-size:10.5px;color:#8ba0b5;transform:scaleX(0.9137);transform-origin:0 0;">inch</div>
<div class="t" style="left:108.6px;top:623.74px;font-size:10.5px;color:#8ba0b5;transform:scaleX(0.8860);transform-origin:0 0;">mm</div>
<svg style="left:0;top:0" width="640" height="674">
  <rect x="72.5" y="621.5" width="31" height="15" rx="7.5" fill="#a9c2d8" stroke="#4a5d70" stroke-width="1.2"/>
  <circle cx="80" cy="629" r="6.8" fill="#fff" stroke="#4a5d70" stroke-width="1.2"/>
  <rect x="577" y="620" width="34.8" height="16.8" fill="#f5f7f9"/>
  <rect x="615" y="620" width="17.8" height="16.8" fill="#f5f7f9"/>
  <path d="M581 628.4 h8 M598.5 628.4 h8 M602.5 624.4 v8" stroke="#6a6a6a" stroke-width="2.2"/>
  <path d="M618.5 629 l5.4 -4.7 l5.4 4.7 h-1.6 v3.8 h-2.6 v-2.5 h-2.4 v2.5 h-2.6 v-3.8z" fill="#6a6a6a"/>
</svg>
<div class="a" style="left:639px;top:124px;width:11.5px;height:530px;background:#ececec"></div>
<div class="a" style="left:650.5px;top:124px;width:12.5px;height:132px;background:#dedede"></div>
<div class="a" style="left:650.5px;top:256px;width:12.5px;height:265px;background:#f4f4f4;border-left:1px solid #e2e2e2"></div>
<div class="a" style="left:650.5px;top:521px;width:12.5px;height:133px;background:#dedede"></div>
<div class="a" style="left:642px;top:608px;width:6.6px;height:24px;border-radius:3.3px;background:#b4b4b4"></div>
<svg style="left:0;top:0" width="670" height="674">
  <path d="M654.3 187 l2.6 2.6 l-2.6 2.6 M657.5 187 l2.6 2.6 l-2.6 2.6" fill="none" stroke="#8a8a8a" stroke-width="1.05"/>
  <path d="M659.7 585.4 l-2.6 2.6 l2.6 2.6 M656.5 585.4 l-2.6 2.6 l2.6 2.6" fill="none" stroke="#777" stroke-width="1.1"/>
  <rect x="655.8" y="384.3" width="1.8" height="1.8" fill="#555"/><rect x="655.8" y="387.5" width="1.8" height="1.8" fill="#555"/><rect x="655.8" y="390.7" width="1.8" height="1.8" fill="#555"/>
</svg>
<div class="a" style="left:37px;top:644px;width:602px;height:10px;background:#ebebeb"></div>
<div class="a" style="left:212px;top:646px;width:23.5px;height:6.5px;border-radius:3.3px;background:#bdbdbd"></div>
<div class="a" style="left:37px;top:654px;width:1163px;height:20px;background:#efefef;border-top:1px solid #dcdcdc"></div>
<div class="t" style="left:42.0px;top:658.32px;font-size:12px;color:#555555;transform:scaleX(0.8940);transform-origin:0 0;-webkit-text-stroke:0.2px #555">Workpieces for “j mercado p4 - big inch”</div>
<svg style="left:0;top:0" width="300" height="674">
  <path d="M238.5 664 l3 -3 l3 3 M238.5 667.5 l3 -3 l3 3" fill="none" stroke="#666" stroke-width="1.1"/>
  <circle cx="257.2" cy="664" r="5.5" fill="#3b7fc4"/>
  <text x="257.2" y="667.6" font-size="9" font-weight="bold" fill="#fff" text-anchor="middle" font-family="Liberation Sans">?</text>
</svg>
<div class="a" style="left:663px;top:124px;width:537px;height:530px;background:#fff"></div>
<svg style="left:663px;top:124px;overflow:hidden" width="537" height="530" viewBox="663 124 537 530">
<g>
<line x1="775.3" y1="426.9" x2="786.4" y2="120.9" stroke="#b3cde8" stroke-width="1.2"/>
<line x1="825.0" y1="427.6" x2="834.4" y2="121.5" stroke="#b3cde8" stroke-width="1.2"/>
<line x1="874.6" y1="428.3" x2="882.3" y2="122.2" stroke="#b3cde8" stroke-width="1.2"/>
<line x1="924.3" y1="429.0" x2="930.2" y2="122.8" stroke="#b3cde8" stroke-width="1.2"/>
<line x1="973.9" y1="429.7" x2="978.2" y2="123.5" stroke="#b3cde8" stroke-width="1.2"/>
<line x1="1023.6" y1="430.4" x2="1026.2" y2="124.2" stroke="#b3cde8" stroke-width="1.2"/>
<line x1="1073.3" y1="431.1" x2="1074.1" y2="124.8" stroke="#b3cde8" stroke-width="1.2"/>
<line x1="1122.9" y1="431.8" x2="1122.1" y2="125.5" stroke="#b3cde8" stroke-width="1.2"/>
<line x1="1172.6" y1="432.5" x2="1170.0" y2="126.2" stroke="#b3cde8" stroke-width="1.2"/>
<line x1="1222.3" y1="433.2" x2="1218.0" y2="126.8" stroke="#b3cde8" stroke-width="1.2"/>
<line x1="727.8" y1="377.0" x2="1246.3" y2="384.3" stroke="#b3cde8" stroke-width="1.2"/>
<line x1="729.8" y1="328.3" x2="1245.5" y2="335.5" stroke="#b3cde8" stroke-width="1.2"/>
<line x1="731.8" y1="280.1" x2="1244.7" y2="287.3" stroke="#b3cde8" stroke-width="1.2"/>
<line x1="733.8" y1="232.5" x2="1243.9" y2="239.6" stroke="#b3cde8" stroke-width="1.2"/>
<line x1="735.8" y1="185.3" x2="1243.1" y2="192.4" stroke="#b3cde8" stroke-width="1.2"/>
<line x1="737.7" y1="138.7" x2="1242.3" y2="145.7" stroke="#b3cde8" stroke-width="1.2"/>
<line x1="725.7" y1="426.2" x2="738.5" y2="120.2" stroke="#22384f" stroke-width="1.5"/>
<line x1="725.7" y1="426.2" x2="1247.1" y2="433.6" stroke="#22384f" stroke-width="1.6"/>
</g></svg>
<div class="t" style="left:720.2px;top:274.58px;font-size:10.2px;color:#4f5a66;">3</div>
<div class="t" style="left:722.2px;top:226.94px;font-size:10.2px;color:#4f5a66;">4</div>
<div class="t" style="left:724.1px;top:179.81px;font-size:10.2px;color:#4f5a66;">5</div>
<div class="t" style="left:726.1px;top:133.18px;font-size:10.2px;color:#4f5a66;">6</div>
<div class="t" style="left:715.0px;top:419.98px;font-size:10px;color:#4f5a66;">0</div>
<div class="t" style="left:723.7px;top:430.98px;font-size:10px;color:#4f5a66;">0</div>
<div class="t" style="left:773.4px;top:431.68px;font-size:10px;color:#4f5a66;">1</div>
<div class="t" style="left:823.0px;top:432.38px;font-size:10px;color:#4f5a66;">2</div>
<div class="t" style="left:872.7px;top:433.08px;font-size:10px;color:#4f5a66;">3</div>
<div class="t" style="left:922.3px;top:433.78px;font-size:10px;color:#4f5a66;">4</div>
<div class="t" style="left:972.0px;top:434.48px;font-size:10px;color:#4f5a66;">5</div>
<div class="t" style="left:1021.6px;top:435.18px;font-size:10px;color:#4f5a66;">6</div>
<div class="t" style="left:1071.3px;top:435.88px;font-size:10px;color:#4f5a66;">7</div>
<div class="t" style="left:1120.9px;top:436.58px;font-size:10px;color:#4f5a66;">8</div>
<div class="t" style="left:1170.6px;top:437.28px;font-size:10px;color:#4f5a66;">9</div>
<svg style="left:0;top:0" width="1200" height="674">
<path d="M718.5 322.0 L1147.4 327.5 L1147.4 431.0 L714.6 425.5 Z" fill="#c8bc9b"/>
</svg>
<div class="a" style="left:863.4px;top:123px;width:340px;height:35.5px;background:#fff;border:1px solid #d9d9d9"></div>
<div class="a" style="left:1000.8px;top:124px;width:1px;height:34px;background:#dadada"></div>
<div class="a" style="left:1080.4px;top:124px;width:1px;height:34px;background:#dadada"></div>
<div class="a" style="left:1108.4px;top:124px;width:1px;height:34px;background:#dadada"></div>
<div class="a" style="left:872px;top:129px;width:24px;height:23.3px;background:#c9bc9a"></div>
<div class="t" style="left:915.5px;top:128.72px;font-size:9.5px;color:#7a7a7a;transform:scaleX(0.9968);transform-origin:0 0;">Birch Plywood</div>
<div class="t" style="left:898.4px;top:141.33px;font-size:13px;color:#5f5f5f;transform:scaleX(0.9338);transform-origin:0 0;">8.25 × 2 × 0.75 in</div>
<div class="t" style="left:1035.8px;top:128.72px;font-size:9.5px;color:#7a7a7a;transform:scaleX(0.9471);transform-origin:0 0;">Bit</div>
<div class="t" style="left:1021.8px;top:141.33px;font-size:13px;color:#5f5f5f;transform:scaleX(0.9864);transform-origin:0 0;">1/16 in</div>
<svg style="left:0;top:0" width="1200" height="200"><path d="M1094.3 135.6 v11 M1088.8 141.1 h11" stroke="#777" stroke-width="1.3"/></svg>
<div class="t" style="left:1124.7px;top:135.22px;font-size:12px;color:#5a5a5a;transform:scaleX(0.9026);transform-origin:0 0;">Cut Settings</div>
<svg style="left:0;top:0" width="1200" height="674">
  <ellipse cx="868.2" cy="623" rx="13.8" ry="16" fill="#4285c8"/>
  <path d="M864.5 618 l8.5 5 l-8.5 5z" fill="#fff"/>
  <rect x="886" y="607.6" width="25" height="31.2" rx="1.5" fill="#4285c8"/>
  <path d="M894.5 623 h8" stroke="#fff" stroke-width="2.4"/>
  <rect x="932" y="607.6" width="24.4" height="31.2" rx="1.5" fill="#4285c8"/>
  <path d="M940 623 h8.4 M944.2 618.8 v8.4" stroke="#fff" stroke-width="2.4"/>
  <rect x="964.5" y="607.6" width="27" height="31.2" rx="1.5" fill="#4285c8"/>
  <path d="M972.5 618.5 v9 M979.5 618.5 l-6 4.5 l6 4.5z M985 618.5 l-6 4.5 l6 4.5z" fill="#fff" stroke="#fff" stroke-width="1.2"/>
  <rect x="996.5" y="619.7" width="96" height="6.6" rx="3.3" fill="#0d6cf0"/>
  <circle cx="1091.2" cy="623" r="6.6" fill="#0d6cf0"/>
  <rect x="1102" y="607.6" width="26.8" height="31.2" rx="1.5" fill="#4285c8"/>
  <path d="M1120.5 618.5 v9 M1108.5 618.5 l6 4.5 l-6 4.5z M1114 618.5 l6 4.5 l-6 4.5z" fill="#fff" stroke="#fff" stroke-width="1.2"/>
  <circle cx="1137.5" cy="622.8" r="4.8" fill="none" stroke="#666" stroke-width="1.3"/>
  <path d="M1137.5 619.6 v3.4 h-2.4" fill="none" stroke="#666" stroke-width="1.2"/>
  <rect x="1175.5" y="607.6" width="26" height="32.4" rx="2" fill="#f0f0f0"/>
  <circle cx="1186" cy="619.8" r="1.4" fill="#222"/><circle cx="1186" cy="623.6" r="1.4" fill="#222"/><circle cx="1186" cy="627.4" r="1.4" fill="#222"/>
</svg>
<div class="t" style="left:915.0px;top:617.18px;font-size:12.5px;color:#8a8a8a;transform:scaleX(1.0074);transform-origin:0 0;">1x</div>
<div class="t" style="left:1145.5px;top:617.18px;font-size:12.5px;color:#8a8a8a;transform:scaleX(0.9781);transform-origin:0 0;">9min</div>
<svg style="left:0;top:0" width="1200" height="674">
<g transform="matrix(1.20194,0.01534,-0.02244,1.19102,485.234,-53.369)">
<rect x="203.23" y="312.60" width="2.6" height="54.62" fill="#3d8fc6"/>
<rect x="204.18" y="313.60" width="0.7" height="52.62" fill="#1f5f8a"/>
<rect x="224.96" y="312.60" width="2.6" height="11.73" fill="#3d8fc6"/>
<rect x="225.91" y="313.60" width="0.7" height="9.73" fill="#1f5f8a"/>
<rect x="246.68" y="312.60" width="2.6" height="22.90" fill="#3d8fc6"/>
<rect x="247.63" y="313.60" width="0.7" height="20.90" fill="#1f5f8a"/>
<rect x="268.41" y="312.60" width="2.6" height="11.73" fill="#3d8fc6"/>
<rect x="269.36" y="313.60" width="0.7" height="9.73" fill="#1f5f8a"/>
<rect x="290.13" y="312.60" width="2.6" height="33.80" fill="#3d8fc6"/>
<rect x="291.08" y="313.60" width="0.7" height="31.80" fill="#1f5f8a"/>
<rect x="311.86" y="312.60" width="2.6" height="11.73" fill="#3d8fc6"/>
<rect x="312.81" y="313.60" width="0.7" height="9.73" fill="#1f5f8a"/>
<rect x="333.58" y="312.60" width="2.6" height="22.90" fill="#3d8fc6"/>
<rect x="334.53" y="313.60" width="0.7" height="20.90" fill="#1f5f8a"/>
<rect x="355.31" y="312.60" width="2.6" height="11.73" fill="#3d8fc6"/>
<rect x="356.26" y="313.60" width="0.7" height="9.73" fill="#1f5f8a"/>
<rect x="377.03" y="312.60" width="2.6" height="44.32" fill="#3d8fc6"/>
<rect x="377.98" y="313.60" width="0.7" height="42.32" fill="#1f5f8a"/>
<rect x="398.76" y="312.60" width="2.6" height="11.73" fill="#3d8fc6"/>
<rect x="399.71" y="313.60" width="0.7" height="9.73" fill="#1f5f8a"/>
<rect x="420.48" y="312.60" width="2.6" height="22.90" fill="#3d8fc6"/>
<rect x="421.43" y="313.60" width="0.7" height="20.90" fill="#1f5f8a"/>
<rect x="442.21" y="312.60" width="2.6" height="11.73" fill="#3d8fc6"/>
<rect x="443.16" y="313.60" width="0.7" height="9.73" fill="#1f5f8a"/>
<rect x="463.93" y="312.60" width="2.6" height="33.80" fill="#3d8fc6"/>
<rect x="464.88" y="313.60" width="0.7" height="31.80" fill="#1f5f8a"/>
<rect x="485.66" y="312.60" width="2.6" height="11.73" fill="#3d8fc6"/>
<rect x="486.61" y="313.60" width="0.7" height="9.73" fill="#1f5f8a"/>
<rect x="507.38" y="312.60" width="2.6" height="22.90" fill="#3d8fc6"/>
<rect x="508.33" y="313.60" width="0.7" height="20.90" fill="#1f5f8a"/>
<rect x="529.11" y="312.60" width="2.6" height="11.73" fill="#3d8fc6"/>
<rect x="530.06" y="313.60" width="0.7" height="9.73" fill="#1f5f8a"/>
<rect x="550.83" y="312.60" width="2.6" height="55.01" fill="#3d8fc6"/>
<rect x="551.78" y="313.60" width="0.7" height="53.01" fill="#1f5f8a"/>
<text transform="translate(238.21,393.30) scale(0.4834,1)" font-size="32.8" font-weight="bold" font-family="Liberation Sans" fill="#c3c1a8" stroke="#3a88bd" stroke-width="2.6" stroke-linejoin="round">J</text>
<text transform="translate(252.90,393.30) scale(0.7064,1)" font-size="32.8" font-weight="bold" font-family="Liberation Sans" fill="#c3c1a8" stroke="#3a88bd" stroke-width="2.6" stroke-linejoin="round">MERCADO</text>
<text transform="translate(379.81,393.30) scale(0.6826,1)" font-size="32.8" font-weight="bold" font-family="Liberation Sans" fill="#c3c1a8" stroke="#3a88bd" stroke-width="2.6" stroke-linejoin="round">4</text>
<text transform="translate(397.94,393.30) scale(0.7922,1)" font-size="32.8" font-weight="bold" font-family="Liberation Sans" fill="#c3c1a8" stroke="#3a88bd" stroke-width="2.6" stroke-linejoin="round">-</text>
<text transform="translate(411.58,393.30) scale(0.7155,1)" font-size="32.8" font-weight="bold" font-family="Liberation Sans" fill="#c3c1a8" stroke="#3a88bd" stroke-width="2.6" stroke-linejoin="round">BIG</text>
<text transform="translate(458.76,393.30) scale(0.7681,1)" font-size="32.8" font-weight="bold" font-family="Liberation Sans" fill="#c3c1a8" stroke="#3a88bd" stroke-width="2.6" stroke-linejoin="round">INCH</text>
<text transform="translate(238.21,393.30) scale(0.4834,1)" font-size="32.8" font-weight="bold" font-family="Liberation Sans" fill="none" stroke="#24577f" stroke-width="0.7" stroke-linejoin="round">J</text>
<text transform="translate(252.90,393.30) scale(0.7064,1)" font-size="32.8" font-weight="bold" font-family="Liberation Sans" fill="none" stroke="#24577f" stroke-width="0.7" stroke-linejoin="round">MERCADO</text>
<text transform="translate(379.81,393.30) scale(0.6826,1)" font-size="32.8" font-weight="bold" font-family="Liberation Sans" fill="none" stroke="#24577f" stroke-width="0.7" stroke-linejoin="round">4</text>
<text transform="translate(397.94,393.30) scale(0.7922,1)" font-size="32.8" font-weight="bold" font-family="Liberation Sans" fill="none" stroke="#24577f" stroke-width="0.7" stroke-linejoin="round">-</text>
<text transform="translate(411.58,393.30) scale(0.7155,1)" font-size="32.8" font-weight="bold" font-family="Liberation Sans" fill="none" stroke="#24577f" stroke-width="0.7" stroke-linejoin="round">BIG</text>
<text transform="translate(458.76,393.30) scale(0.7681,1)" font-size="32.8" font-weight="bold" font-family="Liberation Sans" fill="none" stroke="#24577f" stroke-width="0.7" stroke-linejoin="round">INCH</text>
<path d="M207.8 361.5 a5.2 12.6 0 1 0 10.4 0 a5.2 12.6 0 1 0 -10.4 0 Z M210.7 361.5 a2.3 6.9 0 1 0 4.6 0 a2.3 6.9 0 1 0 -4.6 0 Z" fill="#2f7fb6" fill-rule="evenodd" stroke="#2a6f9f" stroke-width="0.8"/>
<path d="M537.2 350.2 H543.6 V373.3 H539.6 V354.2 H537.2 Z" fill="#b9c9cf" stroke="#2f7fb6" stroke-width="2.2" stroke-linejoin="round"/>
</g></svg>
<svg style="left:0;top:0" width="1200" height="674">
<path d="M722.7 322.0 L722.7 320.6 L801.4 321.3 L801.4 324.0" fill="none" stroke="#d4343c" stroke-width="0.95" stroke-linejoin="round"/>
<path d="M828.3 324.0 L828.3 321.6 L905.9 323.0 L905.9 326.0" fill="none" stroke="#d4343c" stroke-width="0.95" stroke-linejoin="round"/>
<path d="M932.9 325.0 L932.9 323.1 L1011.6 324.5 L1011.6 327.0" fill="none" stroke="#d4343c" stroke-width="0.95" stroke-linejoin="round"/>
<path d="M1037.6 326.0 L1037.6 324.5 L1116.6 325.4 L1116.6 328.0" fill="none" stroke="#d4343c" stroke-width="0.95" stroke-linejoin="round"/>
<path d="M723.5 322.0 L733.5 366.3" fill="none" stroke="#d4343c" stroke-width="0.95" stroke-linejoin="round"/>
<path d="M735.8 392.0 L769.6 406.4" fill="none" stroke="#d4343c" stroke-width="0.95" stroke-linejoin="round"/>
<path d="M776.7 322.0 L809.0 392.9 L818.7 415.0" fill="none" stroke="#d4343c" stroke-width="0.95" stroke-linejoin="round"/>
<path d="M828.3 322.0 L851.5 394.8 L860.0 412.0" fill="none" stroke="#d4343c" stroke-width="0.95" stroke-linejoin="round"/>
<path d="M880.8 322.5 L908.8 404.4 L915.5 420.8" fill="none" stroke="#d4343c" stroke-width="0.95" stroke-linejoin="round"/>
<path d="M932.9 323.0 L955.0 410.2" fill="none" stroke="#d4343c" stroke-width="0.95" stroke-linejoin="round"/>
<path d="M984.9 323.5 L996.4 395.7 L1003.9 397.7" fill="none" stroke="#d4343c" stroke-width="0.95" stroke-linejoin="round"/>
<path d="M1037.6 324.5 L1057.8 397.7" fill="none" stroke="#d4343c" stroke-width="0.95" stroke-linejoin="round"/>
<path d="M1091.5 326.4 L1131.0 371.7 L1141.5 327.0" fill="none" stroke="#d4343c" stroke-width="0.95" stroke-linejoin="round"/>
<path d="M711.7 425.3 L1141.5 327.0" fill="none" stroke="#d4343c" stroke-width="0.95" stroke-linejoin="round"/>
<path d="M711.7 425.3 L764.1 418.0 L770.0 404.5" fill="none" stroke="#d4343c" stroke-width="0.95" stroke-linejoin="round"/>
<path d="M711.7 425.3 L800.0 405.0 L870.0 391.0" fill="none" stroke="#d4343c" stroke-width="0.95" stroke-linejoin="round"/>
<path d="M764.0 411.5 L850.0 404.0 L937.5 405.7" fill="none" stroke="#d4343c" stroke-width="0.95" stroke-linejoin="round"/>
<path d="M850.0 391.0 L879.0 402.5 L907.8 404.4" fill="none" stroke="#d4343c" stroke-width="0.95" stroke-linejoin="round"/>
<path d="M890.5 415.0 L907.8 404.4" fill="none" stroke="#d4343c" stroke-width="0.95" stroke-linejoin="round"/>
<path d="M927.0 410.0 L975.0 416.0 L1003.9 397.7 L1021.0 414.0 L1096.3 413.0" fill="none" stroke="#d4343c" stroke-width="0.95" stroke-linejoin="round"/>
<path d="M1057.8 421.8 L1097.3 415.6" fill="none" stroke="#d4343c" stroke-width="0.95" stroke-linejoin="round"/>
<path d="M1034.7 398.6 L1015.4 421.8" fill="none" stroke="#d4343c" stroke-width="0.95" stroke-linejoin="round"/>
<path d="M818.7 415.0 L790.0 410.0 L770.0 404.5" fill="none" stroke="#d4343c" stroke-width="0.95" stroke-linejoin="round"/>
<path d="M955.0 410.2 L990.0 417.0 L1021.0 414.0" fill="none" stroke="#d4343c" stroke-width="0.95" stroke-linejoin="round"/>
</svg>
<div class="a" style="left:37px;top:124px;width:1163px;height:3.5px;background:linear-gradient(180deg,rgba(0,0,0,.2),rgba(0,0,0,0))"></div>
</body></html>
